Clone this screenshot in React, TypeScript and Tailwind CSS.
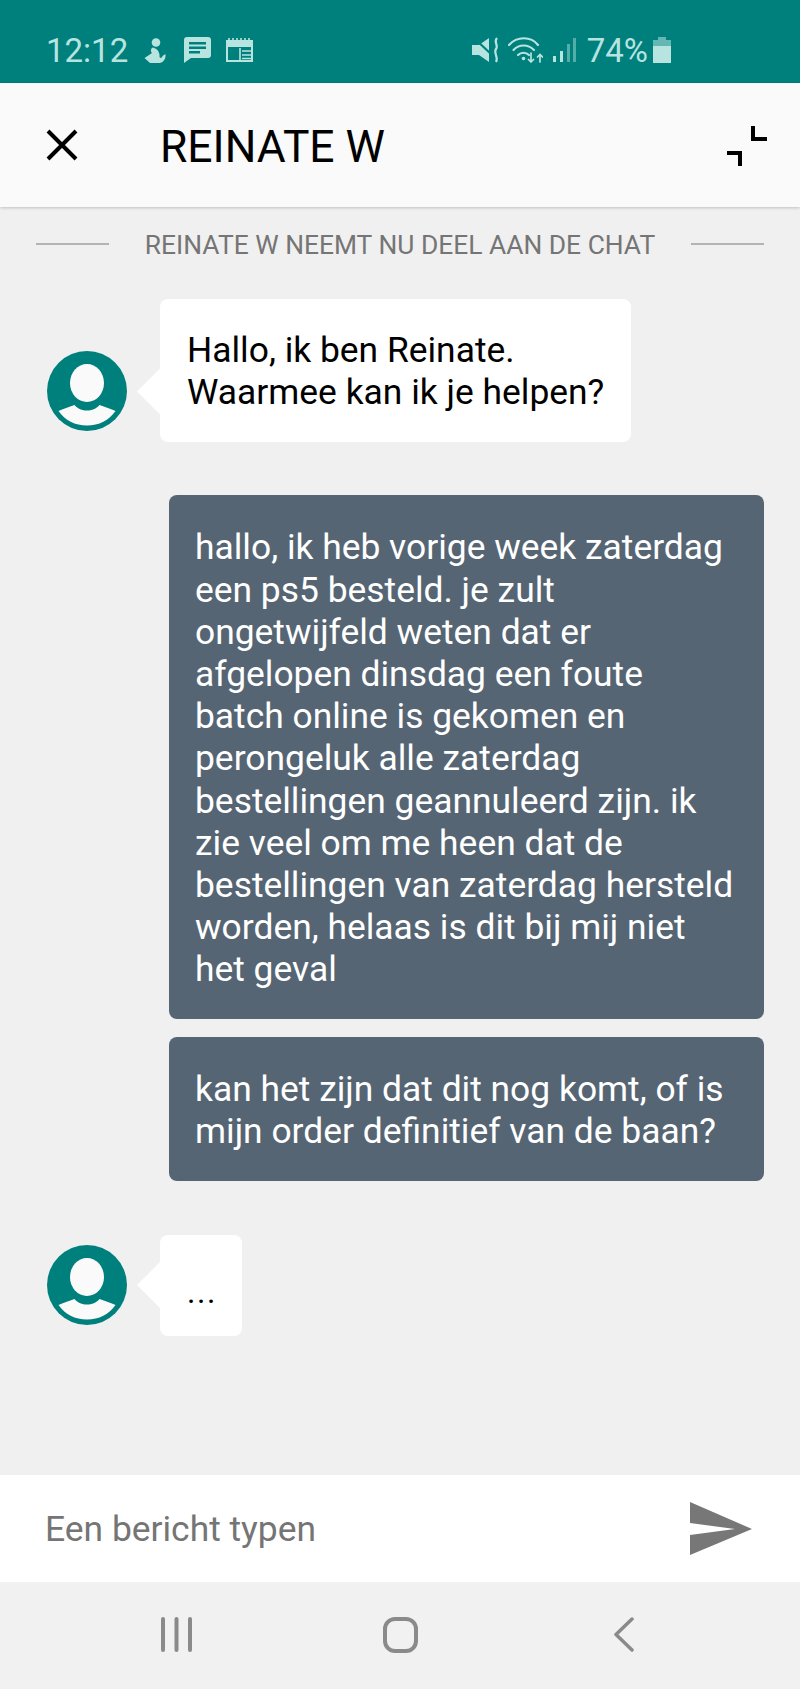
const font = { fontFamily: "Roboto, 'Noto Sans', sans-serif" };

function Avatar() {
  return (
    <svg viewBox="0 0 80 80" className="w-20 h-20 shrink-0">
      <circle cx="40" cy="40" r="40" fill="#00807c" />
      <ellipse cx="40" cy="32" rx="17" ry="19" fill="#fafafa" />
      <path d="M11.5 60 C16 58 22 56 27.5 54 C31 58 35 59.500 40 59.500 C45 59.500 49 58 52.500 54 C58 56 64 58 68.500 60 C62 69.500 52 74.500 40 74.500 C28 74.500 18 69.500 11.500 60 Z" fill="#fafafa" />
    </svg>
  );
}

function AgentMessage({ children }: { children: React.ReactNode }) {
  return (
    <div className="flex items-end pl-[47px]">
      <div className="flex items-center mb-[11px]">
        <Avatar />
        <div className="w-[23px] h-[46px] ml-[10px] shrink-0 bg-white [clip-path:polygon(100%_0,0_50%,100%_100%)]" />
      </div>
      <div className="bg-white rounded-lg text-black">{children}</div>
    </div>
  );
}

function StatusLeft() {
  return (
    <div className="flex items-center">
      <span className="text-[33px] leading-none text-[#b8e4e0]">12:12</span>
      <svg viewBox="0 0 22 25" className="w-[22px] h-[25px] ml-[16px]" fill="#b8e4e0">
        <circle cx="12" cy="4.500" r="4.300" />
        <path d="M9 9.500 C7 10 6 13 8 15 L0.500 20 L6 25 L16 25 C19.500 24 22 21 21.500 16 L18.500 18 C18 20 16.500 20.500 15.500 19 C16 15 14 11 9 9.500 Z" />
      </svg>
      <svg viewBox="0 0 27 26" className="w-[27px] h-[26px] ml-[18px]">
        <path d="M3 0 H24 A3 3 0 0 1 27 3 V18 A3 3 0 0 1 24 21 H7 L0 26 V3 A3 3 0 0 1 3 0 Z" fill="#b8e4e0" />
        <path d="M5 5 H22 V7.500 H5 Z M5 9.500 H22 V12 H5 Z M5 14 H16 V16.500 H5 Z" fill="#00807c" />
      </svg>
      <svg viewBox="0 0 27 24" className="w-[27px] h-[24px] ml-[15px]" fill="none" stroke="#b8e4e0" strokeWidth="2">
        <rect x="1" y="3" width="25" height="6" fill="#b8e4e0" stroke="none" />
        <path d="M1 3 H26 V23 H1 Z" />
        <path d="M14 10 V23 M16 13 H26 M16 17 H26 M16 20.500 H26" strokeWidth="1.600" />
        <path d="M3 0 V3 M7 0 V3 M11 0 V3 M15 0 V3 M19 0 V3 M23 0 V3" strokeWidth="1.600" />
      </svg>
    </div>
  );
}

function StatusRight() {
  return (
    <div className="flex items-center">
      <svg viewBox="0 0 27 26" className="w-[27px] h-[26px]">
        <path d="M0 8 H7 L17 1 V25 L7 18 H0 Z" fill="#b8e4e0" />
        <path d="M2 1 L19 17" stroke="#00807c" strokeWidth="2.200" />
        <path d="M25 1 C21 5 27 8 24 12 C21 16 27 20 24 25" fill="none" stroke="#b8e4e0" strokeWidth="2.200" />
      </svg>
      <svg viewBox="0 0 35 26" className="w-[35px] h-[26px] ml-[9px]" fill="none" stroke="#b8e4e0" strokeWidth="2.200" strokeLinecap="round">
        <path d="M1 8 C9 -1 23 -1 30 8" />
        <path d="M5.500 13 C11 7 20 7 26 13" />
        <path d="M10 18 C13 15 18 15 21 18" />
        <circle cx="15.500" cy="21.500" r="1.800" fill="#b8e4e0" stroke="none" />
        <path d="M23 16 V25 M20.500 22.500 L23 25 L25.500 22.500 M32 25 V18 M29.500 20 L32 17.500 L34.500 20" strokeWidth="1.700" />
      </svg>
      <svg viewBox="0 0 23 24" className="w-[23px] h-[24px] ml-[10px]" fill="#b8e4e0">
        <rect x="0" y="18" width="3" height="6" />
        <rect x="7" y="13" width="3" height="11" />
        <rect x="14" y="6" width="3" height="18" opacity="0.45" />
        <rect x="20" y="0" width="3" height="24" opacity="0.45" />
      </svg>
      <span className="text-[33px] leading-none text-[#b8e4e0] ml-[11px]">74%</span>
      <svg viewBox="0 0 18 26" className="w-[18px] h-[26px] ml-[5px]" fill="#b8e4e0">
        <path d="M5 0 H13 V3 H18 V9 H0 V3 H5 Z" opacity="0.55" />
        <rect x="0" y="9" width="18" height="17" />
      </svg>
    </div>
  );
}

const sent1 = [
  "hallo, ik heb vorige week zaterdag",
  "een ps5 besteld. je zult",
  "ongetwijfeld weten dat er",
  "afgelopen dinsdag een foute",
  "batch online is gekomen en",
  "perongeluk alle zaterdag",
  "bestellingen geannuleerd zijn. ik",
  "zie veel om me heen dat de",
  "bestellingen van zaterdag hersteld",
  "worden, helaas is dit bij mij niet",
  "het geval",
];

export default function App() {
  return (
    <div className="w-[800px] h-[1689px] flex flex-col bg-[#f0f0f0] overflow-hidden" style={font}>
      <div className="h-[83px] bg-[#00807c] flex items-center justify-between pl-[46px] pr-[129px] shrink-0 pt-[17px]">
        <StatusLeft />
        <StatusRight />
      </div>

      <header className="relative h-[124px] shrink-0 bg-[#fafafa] flex items-center shadow-[0_1px_3px_rgba(0,0,0,0.2)]">
        <svg viewBox="0 0 32 32" className="w-8 h-8 ml-[46px]" fill="none" stroke="#000" strokeWidth="4">
          <path d="M2 2 L30 30 M30 2 L2 30" />
        </svg>
        <h1 className="ml-[82px] mt-[4px] text-[44.400px] leading-none text-black font-normal">REINATE W</h1>
        <svg viewBox="0 0 40 40" className="w-10 h-10 ml-auto mr-[33px] mt-[2px]" fill="none" stroke="#000" strokeWidth="4">
          <path d="M26 0 V13 H40 M0 27 H13 V40" />
        </svg>
      </header>

      <div className="h-[76px] shrink-0 flex items-center justify-between px-9">
        <div className="w-[73px] h-0.5 bg-[#b4b4b4] mb-[2px]" />
        <span className="text-[26.400px] leading-none text-[#757575]">REINATE W NEEMT NU DEEL AAN DE CHAT</span>
        <div className="w-[73px] h-0.5 bg-[#b4b4b4] mb-[2px]" />
      </div>

      <main className="flex-1 flex flex-col pt-4 text-[35.400px] leading-[42.200px]">
        <AgentMessage>
          <div className="px-[27px] pt-[30px] pb-[29px] whitespace-nowrap">
            Hallo, ik ben Reinate.
            <br />
            Waarmee kan ik je helpen?
          </div>
        </AgentMessage>

        <div className="ml-[169px] mr-9 mt-[53px] bg-[#566573] rounded-lg text-white px-[26px] pt-[31px] pb-[28px]">
          {sent1.map((line) => (
            <div key={line} className="whitespace-nowrap">{line}</div>
          ))}
        </div>
        <div className="ml-[169px] mr-9 mt-[18px] bg-[#566573] rounded-lg text-white px-[26px] pt-[31px] pb-[29px]">
          <div className="whitespace-nowrap">kan het zijn dat dit nog komt, of is</div>
          <div className="whitespace-nowrap">mijn order definitief van de baan?</div>
        </div>

        <div className="mt-[54px]">
          <AgentMessage>
            <div className="w-[82px] h-[101px] pl-[27px] pt-[36px] text-[32px] tracking-[1.500px]">...</div>
          </AgentMessage>
        </div>
      </main>

      <div className="h-[107px] shrink-0 bg-white flex items-center justify-between pl-[45px] pr-[48px]">
        <span className="text-[35.400px] leading-none text-[#757575] mt-[2px]">Een bericht typen</span>
        <svg viewBox="0 0 62 53" className="w-[62px] h-[53px]" fill="#777777">
          <path d="M0 0 L62 27 L0 53 V33 L45 27 L0 21 Z" />
        </svg>
      </div>

      <nav className="h-[107px] shrink-0 bg-[#f1f1f1] flex items-start justify-between pt-[35px] pl-[161px] pr-[166px]">
        <svg viewBox="0 0 31 35" className="w-[31px] h-[35px]" fill="none" stroke="#8a8a8a" strokeWidth="4" strokeLinecap="round">
          <path d="M2 2 V33 M15.500 2 V33 M29 2 V33" />
        </svg>
        <svg viewBox="0 0 35 36" className="w-[35px] h-9 -ml-[6px]" fill="none" stroke="#8a8a8a" strokeWidth="4">
          <rect x="2" y="2" width="31" height="32" rx="10" />
        </svg>
        <svg viewBox="0 0 20 35" className="w-5 h-[35px]" fill="none" stroke="#8a8a8a" strokeWidth="3.500" strokeLinecap="round" strokeLinejoin="round">
          <path d="M18 2 L2 17.500 L18 33" />
        </svg>
      </nav>
    </div>
  );
}
